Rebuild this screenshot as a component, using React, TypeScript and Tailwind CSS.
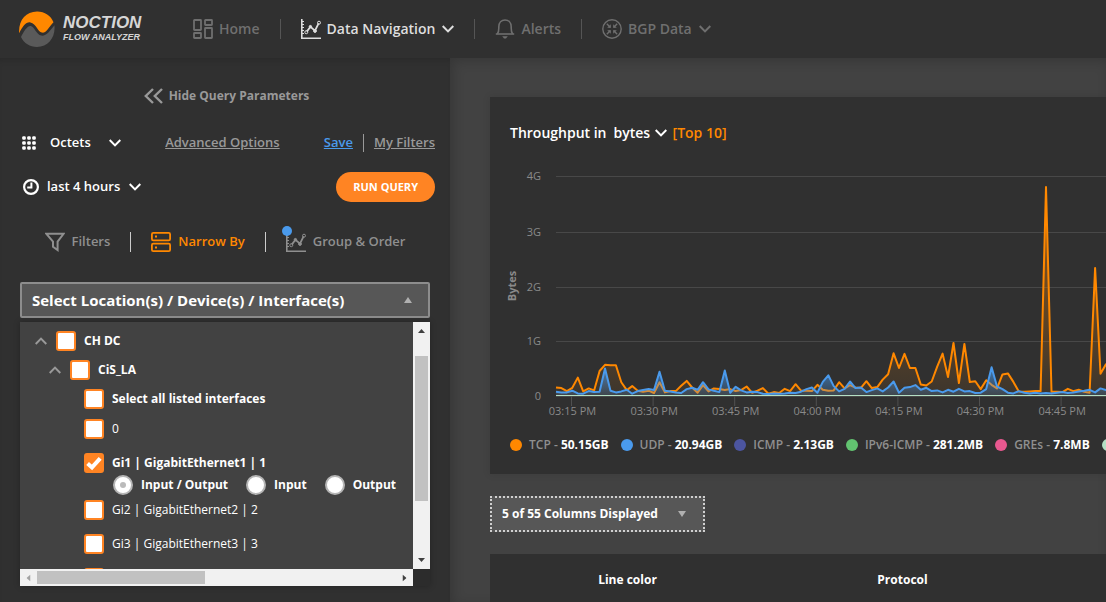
import { useState } from "react";
import type { ReactNode } from "react";

interface IconProps {
  className?: string;
}

function Logo() {
  return (
    <svg className="size-9" viewBox="0 0 36 36" aria-hidden="true">
      <path
        d="M0.2 22.2C-0.8 9.5 6.5 0.6 18 0.4C25.5 0.3 32 4.6 34.5 11.2C32.2 13.6 30.8 15.8 28.6 18.4C26.3 21.2 24.8 22 22.8 21.6C19 20.8 17.2 12.4 11.4 11.4C6.8 10.8 3.6 15.6 0.2 22.2Z"
        fill="#ff8800"
      />
      <path
        d="M35.4 14.2C36.8 26 29.5 36 18 36C10.8 36 5 32.2 2 26C4.6 20.8 8.2 14.6 11.6 15C15.4 15.6 17.4 23.6 22.2 24.6C27.4 25.4 31 19.6 35.4 14.2Z"
        fill="#5a5a5a"
      />
    </svg>
  );
}

function Chevron({ className }: IconProps) {
  return (
    <svg className={className} viewBox="0 0 12 8" fill="none" stroke="currentColor" strokeWidth="2" aria-hidden="true">
      <path d="M0.7 1L6 6.4L11.3 1" />
    </svg>
  );
}

function HomeIcon({ className }: IconProps) {
  return (
    <svg className={className} viewBox="0 0 20 20" fill="none" stroke="currentColor" strokeWidth="1.8" aria-hidden="true">
      <rect x="1" y="1" width="7" height="10" rx="0.5" />
      <rect x="12" y="1" width="7" height="5" rx="0.5" />
      <rect x="1" y="14" width="7" height="5" rx="0.5" />
      <rect x="12" y="9" width="7" height="10" rx="0.5" />
    </svg>
  );
}

function ChartIcon({ className }: IconProps) {
  return (
    <svg className={className} viewBox="0 0 20 20" fill="none" stroke="currentColor" aria-hidden="true">
      <path d="M0.8 0V19.2H20" strokeWidth="1.6" />
      <path d="M1 2.5H3M1 5.5H3M1 8.5H3M1 11.5H3M1 14.5H3" />
      <path d="M5.8 12.6L9.4 7.8L14 11.6L17.6 4.4" strokeWidth="1.8" />
      <circle cx="5.3" cy="13.2" r="1.5" />
      <circle cx="9.4" cy="7.6" r="1.2" fill="currentColor" />
      <circle cx="14" cy="12" r="1.4" fill="currentColor" />
      <circle cx="18" cy="3.7" r="1.5" />
    </svg>
  );
}

function BellIcon({ className }: IconProps) {
  return (
    <svg className={className} viewBox="0 0 20 20" fill="none" stroke="currentColor" strokeWidth="1.6" aria-hidden="true">
      <path d="M0.8 15H19.2" />
      <path d="M2.4 15C4 13 3.8 11 3.8 8C3.8 3.5 6.5 1 10 1C13.5 1 16.2 3.5 16.2 8C16.2 11 16 13 17.6 15" />
      <path d="M7.2 17.2H12.8L11 19.4H9Z" fill="currentColor" stroke="none" />
    </svg>
  );
}

function BgpIcon({ className }: IconProps) {
  return (
    <svg className={className} viewBox="0 0 20 20" fill="none" stroke="currentColor" strokeWidth="1.4" aria-hidden="true">
      <circle cx="10" cy="10" r="9.2" />
      <path d="M4.8 4.8L8.4 8.4M15.2 4.8L11.6 8.4M4.8 15.2L8.4 11.6M15.2 15.2L11.6 11.6" />
      <path d="M8.8 5.2V8.8H5.2ZM11.2 5.2V8.8H14.8ZM8.8 14.8V11.2H5.2ZM11.2 14.8V11.2H14.8Z" fill="currentColor" stroke="none" />
    </svg>
  );
}

function DotsIcon({ className }: IconProps) {
  return (
    <svg className={className} viewBox="0 0 14 14" fill="currentColor" aria-hidden="true">
      {[2, 7, 12].map((y) =>
        [2, 7, 12].map((x) => <rect key={`${x}-${y}`} x={x - 1.8} y={y - 1.8} width="3.6" height="3.6" rx="1.2" />)
      )}
    </svg>
  );
}

function ClockIcon({ className }: IconProps) {
  return (
    <svg className={className} viewBox="0 0 16 16" fill="none" stroke="currentColor" strokeWidth="2.2" aria-hidden="true">
      <circle cx="8" cy="8" r="6.9" />
      <path d="M8.4 3.6V8.6H4.2" strokeWidth="2" />
    </svg>
  );
}

function FilterIcon({ className }: IconProps) {
  return (
    <svg className={className} viewBox="0 0 20 20" fill="none" stroke="currentColor" strokeWidth="2" aria-hidden="true">
      <path d="M1.4 1.8H18.6L12.6 9.6V18L8 14.8V9.6Z" />
    </svg>
  );
}

function NarrowIcon({ className }: IconProps) {
  return (
    <svg className={className} viewBox="0 0 20 20" fill="none" stroke="currentColor" strokeWidth="1.8" aria-hidden="true">
      <rect x="0.9" y="0.9" width="18.2" height="7.4" rx="1.4" />
      <rect x="0.9" y="11.7" width="18.2" height="7.4" rx="1.4" />
      <path d="M4 4.5H6M4 15.5H6" />
    </svg>
  );
}

function Triangle({ className }: IconProps) {
  return (
    <svg className={className} viewBox="0 0 8 6" preserveAspectRatio="none" fill="currentColor" aria-hidden="true">
      <path d="M0 6L4 0L8 6Z" />
    </svg>
  );
}

interface NavItemProps {
  icon: ReactNode;
  label: string;
  active?: boolean;
  menu?: boolean;
}

function NavItem({ icon, label, active, menu }: NavItemProps) {
  return (
    <a
      href="#"
      className={`flex h-5 items-center gap-1.5 text-sm font-semibold ${active ? "text-[#dedede]" : "text-[#6f6f6f]"}`}
    >
      {icon}
      {label}
      {menu && <Chevron className="ml-px h-2 w-3" />}
    </a>
  );
}

function Header() {
  return (
    <header className="flex h-[58px] shrink-0 items-center bg-[#303030]">
      <a href="#" className="ml-[19px] flex w-[174px] items-center gap-2">
        <Logo />
        <span className="flex flex-col font-['Liberation_Sans',sans-serif] font-bold text-[#d6d6d6] italic">
          <span className="text-[17px] leading-4">NOCTION</span>
          <span className="text-[9px] leading-3">FLOW ANALYZER</span>
        </span>
      </a>
      <nav className="flex items-center gap-5">
        <NavItem icon={<HomeIcon className="size-5" />} label="Home" />
        <span className="h-5 w-px bg-[#555]" />
        <NavItem icon={<ChartIcon className="size-5" />} label="Data Navigation" active menu />
        <span className="h-5 w-px bg-[#555]" />
        <NavItem icon={<BellIcon className="size-5" />} label="Alerts" />
        <span className="h-5 w-px bg-[#555]" />
        <NavItem icon={<BgpIcon className="size-5" />} label="BGP Data" menu />
      </nav>
    </header>
  );
}

interface CheckProps {
  label?: string;
  bold?: boolean;
  checked?: boolean;
}

function Check({ label, bold, checked }: CheckProps) {
  return (
    <label className={`flex h-5 items-center gap-2 text-xs whitespace-nowrap text-white ${bold ? "font-bold" : ""}`}>
      <span className="grid size-5">
        <input
          type="checkbox"
          defaultChecked={checked}
          aria-label={label ? undefined : "Gi4"}
          className="peer col-start-1 row-start-1 size-5 appearance-none rounded-[3px] border-2 border-[#ff8423] bg-white checked:bg-[#ff8423]"
        />
        <svg
          className="pointer-events-none invisible col-start-1 row-start-1 size-5 text-white peer-checked:visible"
          viewBox="0 0 20 20"
          fill="none"
          stroke="currentColor"
          strokeWidth="4"
        >
          <path d="M3.6 10.4L8 14.4L16.2 5.4" />
        </svg>
      </span>
      {label}
    </label>
  );
}

function Radio({ label, checked }: CheckProps) {
  return (
    <label className="flex h-5 items-center gap-2">
      <span className="grid size-5 place-items-center">
        <input
          type="radio"
          name="direction"
          defaultChecked={checked}
          className="peer col-start-1 row-start-1 size-5 appearance-none rounded-full border-2 border-[#b5b5b5] bg-white"
        />
        <span className="pointer-events-none invisible col-start-1 row-start-1 size-1.5 rounded-full bg-[#bbb] peer-checked:visible" />
      </span>
      {label}
    </label>
  );
}

function LocationTree() {
  return (
    <div className="mt-1 grid grid-cols-[1fr_17px] grid-rows-[247px_17px] bg-[#2c2c2c] shadow-[0_0_6px_rgba(0,0,0,0.25)]">
      <div className="overflow-hidden bg-[#424242] pt-[9px]">
        <div className="flex items-center gap-[9px] pl-[15px]">
          <Chevron className="h-2 w-3 rotate-180 text-[#999]" />
          <Check label="CH DC" bold />
        </div>
        <div className="mt-[9px] flex items-center gap-[9px] pl-[29px]">
          <Chevron className="h-2 w-3 rotate-180 text-[#999]" />
          <Check label="CiS_LA" bold />
        </div>
        <div className="mt-[9px] pl-16">
          <Check label="Select all listed interfaces" bold />
        </div>
        <ul className="mt-2.5 flex flex-col gap-3.5 pl-16">
          <li>
            <Check label="0" />
          </li>
          <li>
            <Check label="Gi1 | GigabitEthernet1 | 1" bold checked />
            <div className="mt-0.5 -mb-[9px] flex gap-[18px] pl-[29px] text-xs font-bold whitespace-nowrap text-white">
              <Radio label="Input / Output" checked />
              <Radio label="Input" />
              <Radio label="Output" />
            </div>
          </li>
          <li>
            <Check label="Gi2 | GigabitEthernet2 | 2" />
          </li>
          <li>
            <Check label="Gi3 | GigabitEthernet3 | 3" />
          </li>
          <li>
            <Check />
          </li>
        </ul>
      </div>
      <div className="flex flex-col items-center bg-[#f1f1f1] py-[7px] text-[#404040]">
        <Triangle className="h-1 w-[7px]" />
        <span className="mt-[23px] mb-auto h-[145px] w-[13px] bg-[#c1c1c1]" />
        <Triangle className="h-1 w-[7px] rotate-180" />
      </div>
      <div className="flex items-center bg-[#f1f1f1] px-[5px] text-[#404040]">
        <Triangle className="h-1 w-[7px] -rotate-90 text-[#a3a3a3]" />
        <span className="mr-auto ml-[5px] h-[13px] w-[168px] bg-[#c1c1c1]" />
        <Triangle className="h-1 w-[7px] rotate-90" />
      </div>
    </div>
  );
}

function Sidebar() {
  const [open, setOpen] = useState(true);

  return (
    <aside className="w-[450px] shrink-0 bg-[#303030] px-5 pt-7 shadow-[inset_0_6px_6px_-4px_rgba(0,0,0,0.15)]">
      <button className="mx-auto flex h-5 items-center gap-1.5 pl-[3px] text-xs font-bold text-[#999]">
        <svg className="h-4 w-[19px]" viewBox="0 0 19 16" fill="none" stroke="currentColor" strokeWidth="2.4" aria-hidden="true">
          <path d="M9 1L1.8 8L9 15M18 1L10.8 8L18 15" />
        </svg>
        Hide Query Parameters
      </button>

      <div className="mt-[25px] -mr-[5px] flex h-6 items-center text-[13px] font-semibold text-[#999]">
        <DotsIcon className="ml-0.5 size-3.5 text-white" />
        <select aria-label="Units" className="ml-3.5 appearance-none pr-[30px] text-white">
          <option>Octets</option>
        </select>
        <Chevron className="pointer-events-none -ml-3 h-2 w-3 text-white" />
        <a href="#" className="mx-auto underline">
          Advanced Options
        </a>
        <a href="#" className="text-[#4a9aec] underline">
          Save
        </a>
        <span className="mx-2.5 h-[18px] w-px bg-[#999]" />
        <a href="#" className="underline">
          My Filters
        </a>
      </div>

      <div className="mt-[17px] -mr-[5px] flex h-[30px] items-center text-[13px] font-semibold text-white">
        <ClockIcon className="ml-[3px] size-4" />
        <select aria-label="Time range" className="ml-2 appearance-none pr-5">
          <option>last 4 hours</option>
        </select>
        <Chevron className="pointer-events-none -ml-3 h-2 w-3" />
        <button className="ml-auto h-[30px] rounded-full bg-[#ff8423] px-[17px] text-[11px] font-bold">RUN QUERY</button>
      </div>

      <div className="mt-[26px] flex h-7 items-center justify-center gap-5 text-[13px] font-semibold text-[#8f8f8f]">
        <button className="flex items-center gap-[7px]">
          <FilterIcon className="size-5" />
          Filters
        </button>
        <span className="h-5 w-px bg-[#ccc]" />
        <button className="flex items-center gap-[7px] text-[#ff8800]">
          <NarrowIcon className="size-5" />
          Narrow By
        </button>
        <span className="h-5 w-px bg-[#ccc]" />
        <button className="relative flex items-center gap-[7px]">
          <ChartIcon className="size-5" />
          Group &amp; Order
          <span className="absolute -top-1.5 -left-1 size-2.5 rounded-full bg-[#4a9aec]" />
        </button>
      </div>

      <button
        aria-expanded={open}
        onClick={() => setOpen(!open)}
        className="mt-[26px] flex h-9 w-full items-center justify-between rounded-xs border-2 border-[#8d8d8d] bg-[#575757] pr-4 pl-2.5 text-[15px] font-bold text-white"
      >
        Select Location(s) / Device(s) / Interface(s)
        <Triangle className="h-1.5 w-2 text-[#b0b0b0]" />
      </button>
      {open && <LocationTree />}
    </aside>
  );
}

// one sample per minute, MB
const tcp = [
  156, 144, 90, 150, 336, 84, 138, 102, 456, 570, 560, 560, 252, 108, 180, 96, 78, 96, 54, 252, 66, 90, 90, 186, 276,
  156, 60, 198, 84, 138, 126, 108, 126, 90, 108, 174, 60, 96, 144, 42, 72, 54, 132, 90, 216, 96, 96, 90, 204, 114, 96,
  102, 252, 138, 198, 156, 150, 270, 144, 162, 300, 396, 780, 511, 768, 511, 511, 210, 192, 264, 535, 774, 347, 967,
  237, 950, 255, 268, 126, 288, 204, 138, 395, 413, 258, 84, 78, 84, 90, 90, 3814, 78, 78, 72, 132, 90, 114, 78, 60,
  2336, 407, 578, 510, 240,
];

const udp = [
  78, 66, 66, 96, 48, 42, 90, 72, 78, 504, 96, 66, 84, 114, 42, 90, 108, 126, 108, 444, 96, 84, 66, 54, 126, 150, 114,
  252, 120, 96, 72, 468, 60, 168, 102, 66, 78, 72, 42, 36, 48, 42, 48, 60, 54, 78, 126, 156, 60, 258, 377, 180, 84,
  132, 264, 144, 156, 72, 108, 138, 84, 156, 264, 60, 150, 162, 198, 114, 150, 90, 102, 66, 114, 78, 132, 84, 90, 54,
  60, 126, 523, 174, 126, 60, 48, 90, 60, 48, 60, 48, 54, 48, 60, 72, 54, 66, 84, 96, 114, 66, 138, 108, 84, 70,
];

const yTicks = [
  { label: "4G", y: 32 },
  { label: "3G", y: 88 },
  { label: "2G", y: 143 },
  { label: "1G", y: 197 },
  { label: "0", y: 252 },
];

const xTicks = ["03:15 PM", "03:30 PM", "03:45 PM", "04:00 PM", "04:15 PM", "04:30 PM", "04:45 PM"];

const toPoints = (values: number[]) =>
  values.map((v, i) => `${(66 + i * 5.445).toFixed(1)},${(251 - v * 0.0548).toFixed(1)}`).join(" ");

const toArea = (values: number[]) =>
  `66,251 ${toPoints(values)} ${(66 + (values.length - 1) * 5.445).toFixed(1)},251`;

function ThroughputChart() {
  return (
    <svg className="block h-[280px] w-full text-[11px]" role="img" aria-label="Throughput in bytes">
      <defs>
        <linearGradient id="tcpFill" gradientUnits="userSpaceOnUse" x1="0" y1="42" x2="0" y2="251">
          <stop offset="0" stopColor="#ff8800" stopOpacity="0.5" />
          <stop offset="1" stopColor="#ff8800" stopOpacity="0.06" />
        </linearGradient>
        <linearGradient id="udpFill" gradientUnits="userSpaceOnUse" x1="0" y1="222" x2="0" y2="251">
          <stop offset="0" stopColor="#4a9aec" stopOpacity="0.7" />
          <stop offset="1" stopColor="#4a9aec" stopOpacity="0.15" />
        </linearGradient>
      </defs>
      {yTicks.map((t) => (
        <g key={t.label}>
          <line x1="66" x2="100%" y1={t.y - 0.5} y2={t.y - 0.5} stroke="#484848" />
          <text x="51" y={t.y + 3} textAnchor="end" fill="#8a8a8a">
            {t.label}
          </text>
        </g>
      ))}
      {xTicks.map((label, i) => (
        <g key={label}>
          <line x1={81.5 + i * 81.6} x2={81.5 + i * 81.6} y1="251" y2="261" stroke="#505050" />
          <text x={82.5 + i * 81.6} y="270" textAnchor="middle" fill="#8a8a8a">
            {label}
          </text>
        </g>
      ))}
      <text x="26" y="141" transform="rotate(-90 26 141)" textAnchor="middle" fill="#8a8a8a" className="font-bold">
        Bytes
      </text>
      <polygon points={toArea(tcp)} fill="url(#tcpFill)" />
      <polyline points={toPoints(tcp)} fill="none" stroke="#ff8800" strokeWidth="2" strokeLinejoin="round" />
      <polygon points={toArea(udp)} fill="url(#udpFill)" />
      <polyline points={toPoints(udp)} fill="none" stroke="#4a9aec" strokeWidth="2" strokeLinejoin="round" />
      <line x1="66" x2="100%" y1="250.5" y2="250.5" stroke="#b4dfc4" />
    </svg>
  );
}

const legend = [
  { name: "TCP", total: "50.15GB", dot: "bg-[#ff8800]" },
  { name: "UDP", total: "20.94GB", dot: "bg-[#4a9aec]" },
  { name: "ICMP", total: "2.13GB", dot: "bg-[#4c55a0]" },
  { name: "IPv6-ICMP", total: "281.2MB", dot: "bg-[#62c370]" },
  { name: "GREs", total: "7.8MB", dot: "bg-[#e8588f]" },
];

function Dashboard() {
  return (
    <main className="min-w-0 flex-1 overflow-hidden bg-[#424242] pt-[39px] pl-10 shadow-[inset_3px_3px_12px_rgba(0,0,0,0.18)]">
      <section className="overflow-hidden bg-[#303030] pt-6 pb-[9px] shadow-[0_0_8px_rgba(0,0,0,0.1)]">
        <h2 className="flex h-6 items-center pl-5 text-sm font-semibold whitespace-nowrap text-white">
          Throughput in
          <select aria-label="Metric" className="ml-[7px] appearance-none pr-4">
            <option>bytes</option>
          </select>
          <Chevron className="pointer-events-none -ml-3 h-2 w-3" />
          <span className="ml-1.5 text-[#ff8800]">[Top 10]</span>
        </h2>
        <ThroughputChart />
        <ul className="flex h-10 items-center gap-3 pl-5 text-xs font-semibold whitespace-nowrap text-[#8f8f8f]">
          {legend.map((item) => (
            <li key={item.name} className="flex items-center gap-[7px]">
              <span className={`size-3 shrink-0 rounded-full ${item.dot}`} />
              <span>
                {item.name} - <b className="font-bold text-white">{item.total}</b>
              </span>
            </li>
          ))}
          <li className="size-3 shrink-0 rounded-full bg-[#b4dfc4]" />
        </ul>
      </section>

      <button className="mt-[22px] flex h-9 w-[215px] items-center justify-between border-2 border-dotted border-[#d0d0d0] bg-[#575757] pr-[17px] pl-2.5 text-xs font-bold text-white">
        5 of 55 Columns Displayed
        <Triangle className="h-1.5 w-2 rotate-180 text-[#b0b0b0]" />
      </button>

      <table className="mt-[22px] w-full table-fixed bg-[#303030] text-xs text-white">
        <thead>
          <tr className="h-[52px]">
            <th className="w-[275px] font-bold">Line color</th>
            <th className="w-[275px] font-bold">Protocol</th>
            <td />
          </tr>
        </thead>
      </table>
    </main>
  );
}

export default function App() {
  return (
    <div className="flex h-screen flex-col overflow-hidden bg-[#303030] font-['Open_Sans',sans-serif]">
      <Header />
      <div className="flex min-h-0 flex-1">
        <Sidebar />
        <Dashboard />
      </div>
    </div>
  );
}
